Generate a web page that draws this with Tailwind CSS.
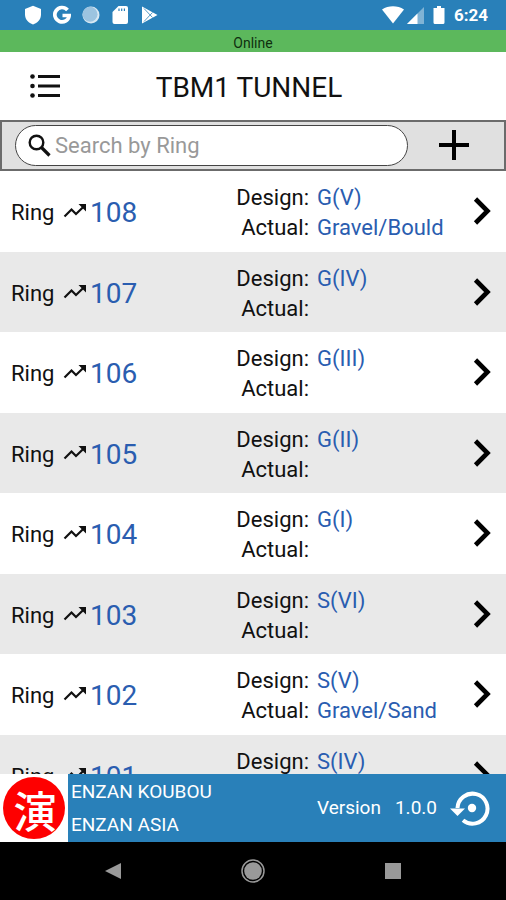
<!DOCTYPE html>
<html lang="en">
<head>
<meta charset="utf-8">
<meta name="viewport" content="width=device-width, initial-scale=1">
<title>TBM1 TUNNEL</title>
<script src="https://cdn.jsdelivr.net/npm/@tailwindcss/browser@4"></script>
</head>
<body class="flex h-screen flex-col overflow-hidden bg-white font-['Roboto','Noto_Sans_CJK_JP',sans-serif] text-black">

<svg class="hidden" aria-hidden="true">
  <symbol id="trend" viewBox="0 0 24 16"><path d="M1.500 13.500L8.500 6.500L13 11L20.500 3.800" fill="none" stroke="#111" stroke-width="2.200"/><path d="M15.500 1H23V8.500z" fill="#111"/></symbol>
  <symbol id="chevron" viewBox="0 0 20 28"><path d="M2.500 2L14.500 14L2.500 26" fill="none" stroke="#000" stroke-width="4.600"/></symbol>
</svg>

<!-- Status bar -->
<div class="flex h-[30px] shrink-0 items-center bg-[#2980b9] pr-[18px] pl-6">
  <div class="flex items-center gap-[11px]">
    <svg class="h-5 w-[18px]" viewBox="0 0 18 20" fill="#fff"><path d="M9 .800L17 4V9.500C17 14.500 13.500 18 9 19.500C4.500 18 1 14.500 1 9.500V4z"/></svg>
    <svg class="h-5 w-[18px]" viewBox="0 0 18 20" fill="none" stroke="#fff" stroke-width="3.700"><path d="M14.500 5A7.200 7.200 0 1 0 16.200 10.500H9.500"/></svg>
    <svg class="h-5 w-[18px]" viewBox="0 0 18 20"><circle cx="9" cy="10" r="8.500" fill="#d8e8f3"/><circle cx="8" cy="9.200" r="7.500" fill="#9cc4e0"/></svg>
    <svg class="h-5 w-[18px]" viewBox="0 0 18 20"><path d="M7.500 1H15A2 2 0 0 1 17 3V17A2 2 0 0 1 15 19H3.500A2 2 0 0 1 1.500 17V7z" fill="#fff"/><path d="M8 3.500v2.500M10.700 3.500v2.500M13.400 3.500v2.500" stroke="#2980b9" stroke-width="1.200"/></svg>
    <svg class="h-5 w-[18px]" viewBox="0 0 18 20"><path d="M2 1.500L17.500 10L2 18.500z" fill="#fff"/><path d="M4 3.500L12.500 12.500M4 16.500L12.500 7.500" fill="none" stroke="#2980b9" stroke-width=".8"/></svg>
  </div>
  <div class="ml-auto flex items-center">
    <svg class="h-5 w-[22px]" viewBox="0 0 22 20"><path d="M0 4.500C6.500 .300 15.500 .300 22 4.500L11 18.500z" fill="#fff"/></svg>
    <svg class="ml-[3px] h-5 w-[18px]" viewBox="0 0 18 20"><path d="M17 2V19H0z" fill="#7fb3d5"/><path d="M10.500 8.500V19H0z" fill="#fff"/></svg>
    <svg class="ml-2 h-5 w-3" viewBox="0 0 12 20"><path d="M4 1H8V3H11.500V17.500A1.500 1.500 0 0 1 10 19H2A1.500 1.500 0 0 1 .500 17.500V3H4z" fill="#fff"/></svg>
    <span class="ml-[9px] text-[17px] leading-5 font-bold text-white">6:24</span>
  </div>
</div>

<div class="h-[22px] shrink-0 bg-[#5cb85c] pt-1 text-center text-sm leading-[18px] text-[#0f2f0f]">Online</div>

<!-- Header -->
<header class="grid h-[68px] shrink-0 grid-cols-[90px_1fr_90px] items-center">
  <button type="button" aria-label="Menu" class="ml-[30px] w-8">
    <svg class="h-7 w-8" viewBox="0 0 32 28"><g fill="#111"><circle cx="2.500" cy="4.500" r="2.300"/><circle cx="2.500" cy="14" r="2.300"/><circle cx="2.500" cy="23.500" r="2.300"/></g><path d="M8 4.500H30M8 14H30M8 23.500H30" stroke="#111" stroke-width="3"/></svg>
  </button>
  <h1 class="pt-1 pr-2 text-center text-[28px] leading-8 text-[#111]">TBM1 TUNNEL</h1>
</header>

<!-- Search -->
<form class="flex h-[51px] shrink-0 items-center border-2 border-[#6b6b6b] bg-[#e0e0e0] pl-[13px]" role="search">
  <label class="flex h-[41px] flex-1 items-center rounded-full border border-[#444] bg-white pl-3">
    <svg class="h-6 w-6 shrink-0" viewBox="0 0 24 24" fill="none" stroke="#111"><circle cx="8.500" cy="8.500" r="6.800" stroke-width="2.400"/><path d="M13.500 13.500L21.500 21.500" stroke-width="3.200"/></svg>
    <input type="text" aria-label="Search by Ring" placeholder="Search by Ring" class="ml-[3px] w-full min-w-0 bg-transparent text-[22px] leading-7 outline-none placeholder:text-[#999]">
  </label>
  <button type="button" aria-label="Add ring" class="flex w-24 justify-center pr-1">
    <svg class="h-8 w-8" viewBox="0 0 32 32"><path d="M1 15H31M16 0V30" stroke="#000" stroke-width="4"/></svg>
  </button>
</form>

<!-- Ring list -->
<ul id="rings" class="min-h-0 flex-1 overflow-hidden"></ul>

<template id="row">
  <li class="odd:border-b odd:border-white even:bg-[#e9e9e9]">
    <a href="#" class="flex h-20 items-center pr-[13px] pl-[11px] text-[22px] text-[#111]">
      <span class="flex flex-1 items-center pt-1">
        <span class="w-[52px] leading-[30px]">Ring</span>
        <svg class="mb-1 h-4 w-6"><use href="#trend"/></svg>
        <span data-f="num" class="ml-[3px] text-[28px] leading-[30px] text-[#2a5db0]"></span>
      </span>
      <span class="grid w-[239px] grid-cols-[75px_1fr] gap-x-2 pt-[3px] leading-[30px]">
        <span class="text-right">Design:</span><span data-f="design" class="text-[#2a5db0]"></span>
        <span class="text-right">Actual:</span><span data-f="actual" class="text-[#2a5db0]"></span>
      </span>
      <svg class="h-7 w-5 shrink-0"><use href="#chevron"/></svg>
    </a>
  </li>
</template>

<!-- Footer -->
<footer class="flex h-[68px] shrink-0 bg-[#2980b9] text-[19px] text-white">
  <svg class="h-[68px] w-[68px] shrink-0 bg-white" viewBox="0 0 68 68" role="img" aria-label="Enzan Koubou">
    <circle cx="34" cy="34" r="31" fill="#fe0000"/>
    <text x="35" y="54" text-anchor="middle" font-size="43" font-weight="500" fill="#fff" font-family="'Noto Sans CJK JP', sans-serif">演</text>
  </svg>
  <div class="ml-[3px] pt-px leading-[33px]">
    <p>ENZAN KOUBOU</p>
    <p>ENZAN ASIA</p>
  </div>
  <div class="ml-auto flex items-center pr-4">
    <span>Version</span>
    <span class="ml-[14px]">1.0.0</span>
    <button type="button" aria-label="Check for updates" class="ml-[13px]">
      <svg class="h-9 w-10" viewBox="0 0 40 36"><path d="M7.500 18A15 15 0 1 1 13 30.300" fill="none" stroke="#fff" stroke-width="4"/><path d="M0 18.500H15L7.500 26z" fill="#fff"/><circle cx="22" cy="18" r="4.200" fill="#fff"/></svg>
    </button>
  </div>
</footer>

<!-- System navigation -->
<nav class="flex h-[58px] shrink-0 items-center justify-center gap-[116px] bg-black" aria-label="System">
  <button type="button" aria-label="Back"><svg class="h-6 w-6" viewBox="0 0 24 24"><path d="M4 12L20 4V20z" fill="#999"/></svg></button>
  <button type="button" aria-label="Home"><svg class="h-6 w-6" viewBox="0 0 24 24"><circle cx="12" cy="12" r="11" fill="none" stroke="#999" stroke-width="1.500"/><circle cx="12" cy="12" r="8.800" fill="#999"/></svg></button>
  <button type="button" aria-label="Recent apps"><svg class="h-6 w-6" viewBox="0 0 24 24"><path d="M4 4H20V20H4z" fill="#999"/></svg></button>
</nav>

<script>
const rings = [
  ["108", "G(V)", "Gravel/Bould"], ["107", "G(IV)", ""], ["106", "G(III)", ""], ["105", "G(II)", ""],
  ["104", "G(I)", ""], ["103", "S(VI)", ""], ["102", "S(V)", "Gravel/Sand"], ["101", "S(IV)", ""]
];
const list = document.getElementById("rings");
const tpl = document.getElementById("row");
for (const [num, design, actual] of rings) {
  const row = tpl.content.cloneNode(true);
  row.querySelector('[data-f="num"]').textContent = num;
  row.querySelector('[data-f="design"]').textContent = design;
  row.querySelector('[data-f="actual"]').textContent = actual;
  list.append(row);
}
</script>
</body>
</html>
